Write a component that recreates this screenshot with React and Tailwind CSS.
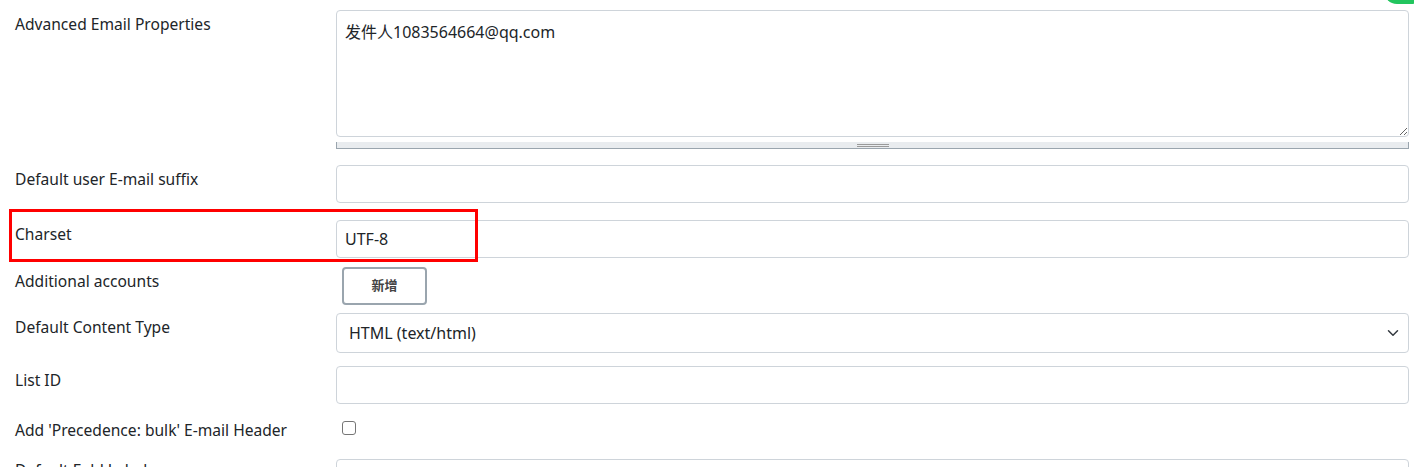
import React from "react";

const font = { fontFamily: '"Noto Sans", "Noto Sans CJK SC", sans-serif' };

function Row({ label, children, className = "", labelPad = "pt-[4px]" }) {
  return (
    <div className={`flex ${className}`}>
      <div className={`w-[336px] shrink-0 pl-[15px] ${labelPad} text-[15.6px] leading-5 text-[#212529]`}>
        {label}
      </div>
      <div className="flex-1 pr-[5px]">{children}</div>
    </div>
  );
}

const inputCls =
  "block w-full h-[38px] rounded border border-[#ced4da] bg-white px-2 text-[16px] text-[#212529] outline-none";

export default function App() {
  return (
    <div className="relative w-[1414px] h-[467px] overflow-hidden bg-white" style={font}>
      <div className="absolute -top-[22px] -right-[10px] w-[40px] h-[26px] rounded-full bg-[#22c55e]" />

      <div className="pt-[10px]">
        <Row label="Advanced Email Properties">
          <textarea
            className="block w-full h-[127px] rounded border border-[#ced4da] px-2 py-[9px] text-[16px] text-[#212529] outline-none"
            defaultValue="发件人1083564664@qq.com"
            style={font}
          />
          <div className="mt-[5px] h-[7px] bg-[#e9ecef] border-l border-r border-b border-[#9aa5ae] flex justify-center items-center">
            <div className="w-[32px] h-[3px] border-t border-b border-[#9a9a9a]" />
          </div>
        </Row>

        <Row label="Default user E-mail suffix" className="mt-[16px]">
          <input className={inputCls} style={font} />
        </Row>

        <Row label="Charset" className="mt-[17px] relative">
          <div className="absolute left-[9px] -top-[11px] w-[469px] h-[53px] border-[3px] border-[#ff0000] pointer-events-none" />
          <input className={inputCls} defaultValue="UTF-8" style={font} />
        </Row>

        <Row label="Additional accounts" className="mt-[9px]">
          <button
            className="ml-[6px] w-[85px] h-[38px] rounded border-2 border-[#9aa5ae] bg-white text-[13px] font-bold text-[#444]"
            style={font}
          >
            新增
          </button>
        </Row>

        <Row label="Default Content Type" className="mt-[8px]">
          <div className="relative">
            <select
              className={`${inputCls} h-[40px] appearance-none px-3`}
              style={font}
              defaultValue="html"
            >
              <option value="html">HTML (text/html)</option>
            </select>
            <svg
              className="absolute right-[9px] top-[14px] pointer-events-none"
              width="14"
              height="12"
              viewBox="0 0 16 16"
            >
              <path
                d="M2 5l6 6 6-6"
                fill="none"
                stroke="#343a40"
                strokeWidth="2"
                strokeLinecap="round"
                strokeLinejoin="round"
              />
            </svg>
          </div>
        </Row>

        <Row label="List ID" className="mt-[13px]">
          <input className={inputCls} style={font} />
        </Row>

        <Row label="Add 'Precedence: bulk' E-mail Header" className="mt-[12px]">
          <input
            type="checkbox"
            className="ml-[6px] mt-[5px] w-[14px] h-[14px] appearance-none rounded-[3px] border border-[#767676] bg-white"
          />
        </Row>

        <Row label="Default Fold Label" className="mt-[18px]" labelPad="pt-[1px]">
          <input className={inputCls} style={font} />
        </Row>
      </div>
    </div>
  );
}
